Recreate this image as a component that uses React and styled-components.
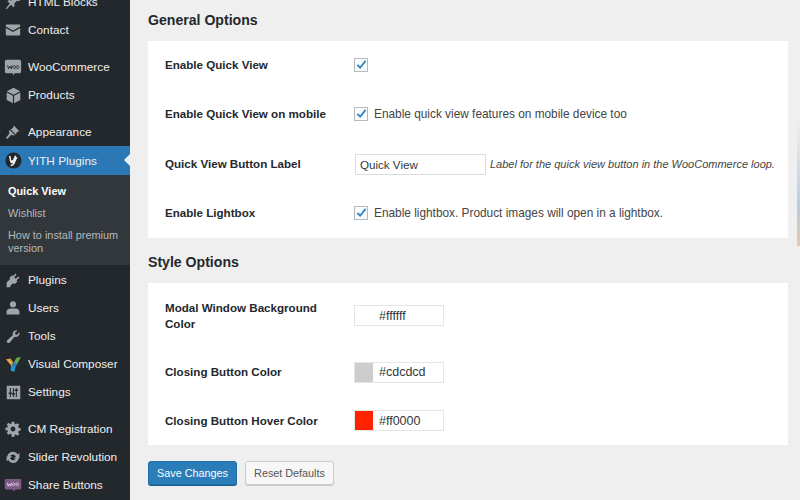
import React from 'react';
import styled, { createGlobalStyle } from 'styled-components';

const GlobalStyle = createGlobalStyle`
  html, body {
    margin: 0;
    padding: 0;
    height: 500px;
    overflow: hidden;
    background: #efefef;
    font-family: "Liberation Sans", Arial, sans-serif;
  }
`;

const Page = styled.div`
  position: relative;
  display: flex;
  width: 800px;
  height: 500px;
  overflow: hidden;
`;

const Sidebar = styled.nav`
  flex: 0 0 130px;
  height: 500px;
  overflow: hidden;
  background: #23282d;
`;

const MenuList = styled.div`
  display: flex;
  flex-direction: column;
  margin-top: -12px;
`;

const MenuItem = styled.div`
  position: relative;
  display: flex;
  align-items: center;
  flex: 0 0 ${(p) => (p.$active ? 29 : 28)}px;
  margin-top: ${(p) => (p.$gap ? 9 : 0)}px;
  color: #eeeeee;
  background: ${(p) => (p.$active ? '#2a78b6' : 'transparent')};
  font-size: 11.8px;
  ${(p) =>
    p.$active &&
    `&::after {
      content: '';
      position: absolute;
      right: 0;
      top: 8px;
      border: 6px solid transparent;
      border-right-color: #f1f1f1;
      border-left-width: 0;
    }`}
`;

const IconSlot = styled.span`
  flex: 0 0 28px;
  display: flex;
  justify-content: center;
  padding-right: 2px;
  box-sizing: border-box;
`;

const SubMenu = styled.div`
  display: flex;
  flex-direction: column;
  height: 90px;
  padding: 9px 8px 0;
  margin-bottom: 1px;
  box-sizing: border-box;
  background: #32373c;
`;

const SubItem = styled.div`
  font-size: 10.9px;
  line-height: 13px;
  margin-bottom: 8px;
  padding-top: 1px;
  color: ${(p) => (p.$current ? '#ffffff' : '#b4b9be')};
  font-weight: ${(p) => (p.$current ? 700 : 400)};
`;

const Main = styled.main`
  flex: 1;
  padding: 0 12px 0 18px;
  min-width: 0;
`;

const SectionTitle = styled.h2`
  margin: 0;
  height: ${(p) => p.$height}px;
  padding-top: ${(p) => p.$top}px;
  box-sizing: border-box;
  font-size: 14.1px;
  line-height: 18px;
  font-weight: 700;
  color: #23282d;
`;

const Card = styled.section`
  display: flex;
  flex-direction: column;
  height: ${(p) => p.$height}px;
  padding-left: 17px;
  box-sizing: border-box;
  background: #ffffff;
`;

const Row = styled.div`
  display: flex;
  align-items: center;
  height: ${(p) => p.$height}px;
`;

const Label = styled.div`
  flex: 0 0 189px;
  font-size: 11.6px;
  line-height: 16px;
  font-weight: 700;
  color: #23282d;
  padding-right: 14px;
  box-sizing: border-box;
`;

const CheckBox = styled.span`
  display: flex;
  align-items: center;
  justify-content: center;
  width: 12px;
  height: 12px;
  margin-right: 6px;
  border: 1px solid #b4b9be;
  background: #fbfbfb;
`;

const OptionText = styled.span`
  font-size: 11.85px;
  color: #444444;
`;

const TextInput = styled.div`
  width: 131px;
  height: 21px;
  margin: 0 4px 0 1px;
  padding-left: 4px;
  box-sizing: border-box;
  border: 1px solid #dddddd;
  font-size: 11.6px;
  line-height: 20px;
  color: #32373c;
`;

const Hint = styled.em`
  font-size: 11px;
  color: #444444;
`;

const ColorField = styled.div`
  display: flex;
  align-items: center;
  width: 90px;
  height: 21px;
  box-sizing: border-box;
  border: 1px solid #e5e5e5;
  font-size: 12.5px;
  color: #32373c;
`;

const Swatch = styled.span`
  flex: 0 0 18px;
  height: 19px;
  margin-right: 6px;
  background: ${(p) => p.$color};
`;

const Actions = styled.div`
  display: flex;
  gap: 8px;
  margin-top: 16px;
`;

const Button = styled.button`
  width: ${(p) => p.$width}px;
  height: 24px;
  padding: 0;
  border-radius: 3px;
  font-family: inherit;
  font-size: 10.8px;
  border: 1px solid ${(p) => (p.$primary ? '#1f6ea8' : '#cccccc')};
  background: ${(p) => (p.$primary ? '#2a7db9' : '#f7f7f7')};
  color: ${(p) => (p.$primary ? '#ffffff' : '#555555')};
  box-shadow: 0 1px 0 ${(p) => (p.$primary ? '#1a5f92' : '#cccccc')};
`;

const ScrollEdge = styled.div`
  position: absolute;
  right: 0;
  top: 118px;
  width: 3px;
  height: 128px;
  background: linear-gradient(#eef0f2, #b9cbdc 70%, #e8c9a5);
`;

const Ico = ({ children, view = '0 0 20 20', size = 16 }) => (
  <svg width={size} height={size} viewBox={view} fill="#a0a5aa" aria-hidden="true">
    {children}
  </svg>
);

const icons = {
  pin: (
    <Ico>
      <path d="M11 1l8 7-2 1-2-.5-3.500 3.500.5 3-1.500 1.500-3-3-5.500 5.500-1-1 5-6-3-3L5 7.500l3 .5L11.500 4.500 11 1z" />
    </Ico>
  ),
  mail: (
    <Ico>
      <path d="M2 3h16c.6 0 1 .4 1 1v1.500l-9 5-9-5V4c0-.6.4-1 1-1zM1 7.500l9 5 9-5V16c0 .6-.4 1-1 1H2c-.6 0-1-.4-1-1V7.500z" />
    </Ico>
  ),
  woo: (
    <Ico size={18}>
      <path d="M3 2h14c1.100 0 2 .9 2 2v11c0 1.100-.9 2-2 2h-5l-2 2.500V17H3c-1.100 0-2-.9-2-2V4c0-1.100.9-2 2-2z" />
      <path d="M4 8l1 4 1.500-3 1.500 3 1-4M11.500 8.500a1.600 1.600 0 1 0 .01 0zM15 8.500a1.600 1.600 0 1 0 .01 0z" fill="none" stroke="#23282d" strokeWidth="1" />
    </Ico>
  ),
  cube: (
    <Ico size={17}>
      <path d="M10 1l8 4-8 4-8-4 8-4zM2 6.500l7.300 3.700V19L2 15.300V6.500zM18 6.500v8.800L10.700 19v-8.800L18 6.500z" />
    </Ico>
  ),
  brush: (
    <Ico>
      <path d="M11 2l7 7-3 1-1.500 3L7 6.500 10 5l1-3zM6 7.500l6.500 6.500-2 .5-2.500-1-5 5-2-1 4.500-5.500-.5-2.500.5-2z" />
    </Ico>
  ),
  yith: (
    <svg width="17" height="17" viewBox="0 0 20 20" aria-hidden="true">
      <circle cx="10" cy="10" r="9.500" fill="#23282d" />
      <path d="M6.500 4.500l.8 4.800c.6.700 1.500.6 2.200-.2l1.500-3.600c.5-1 1.300-1.500 2.200-1.200l-.3 1.700 1.800.2-3.200 7c-1 2.300-2.600 3.500-5 3.300l.4-1.700c1.300.1 2.200-.4 2.800-1.500-1.800.6-3.400-.2-3.800-2L4.700 5l1.800-.5z" fill="#eeeeee" />
    </svg>
  ),
  plug: (
    <Ico>
      <path d="M13 2l1.500 1.500-3 3L13.500 8.500l3-3L18 7l-3.500 3.500 1 1-2 2.500c-1.500 1-3 1-4.500.5l-3 4.500H2V13l4-3.500c-.5-1.500 0-3 1-4L9.500 4l1 1L13 2z" />
    </Ico>
  ),
  user: (
    <Ico>
      <circle cx="10" cy="5.500" r="3.800" />
      <path d="M2 18v-3.500c0-2 2-4 4.500-4h7c2.500 0 4.500 2 4.500 4V18H2z" />
    </Ico>
  ),
  wrench: (
    <Ico>
      <path d="M18 5c.5 2-.1 3.800-1.400 5-1.200 1.100-3 1.500-4.600 1L6 18c-1 1-2.500 1-3.300.2C1.800 17.300 2 16 3 15l6.800-6c-.5-1.700-.1-3.500 1.200-4.800C12.200 3 14 2.500 15.500 3L12.500 6l.5 2 2 .5L18 5z" />
    </Ico>
  ),
  composer: (
    <svg width="15" height="15" viewBox="0 0 20 20" aria-hidden="true">
      <path d="M0 3l6-1 4 6-2 5z" fill="#e8a33a" />
      <path d="M10 8l4-7 6-1-5 9-4 1z" fill="#6aa84f" />
      <path d="M7 10l4-3 5 2-4 4z" fill="#2f7fbf" />
      <path d="M7 12l6 0-2 8-5-2z" fill="#1f9ad6" />
    </svg>
  ),
  sliders: (
    <Ico size={15}>
      <path fillRule="evenodd" d="M1 1h18v18H1V1zm4 3v6H3.500v2H5v4h1.500v-4H8v-2H6.500V4H5zm8 0v2h-1.500v2H13v8h1.500V8H16V6h-1.500V4H13zM9.200 4v7H8v2h1.200v3h1.400v-3h1.200v-2h-1.200V4H9.200z" />
    </Ico>
  ),
  gear: (
    <Ico size={16}>
      <path
        fillRule="evenodd"
        d="M8.500 1h3l.5 2.500 1.500.6 2.200-1.400 2.100 2.100-1.400 2.200.6 1.500 2.500.5v3l-2.500.5-.6 1.500 1.400 2.200-2.100 2.100-2.200-1.400-1.500.6-.5 2.500h-3L8 16.500l-1.500-.6-2.200 1.400-2.100-2.100 1.400-2.200-.6-1.500L.5 11.500v-3L3 8l.6-1.500-1.400-2.200 2.100-2.100 2.200 1.400L8 3.500 8.500 1zM10 7a3 3 0 1 0 .01 0z"
      />
    </Ico>
  ),
  refresh: (
    <Ico size={16}>
      <path d="M10 3.500c2.400 0 4.500 1.300 5.600 3.300L18 5v7h-7l2.600-2.500C12.900 8 11.600 7 10 7 8.300 7 6.800 8.100 6.300 9.700L2.900 8.800C3.800 5.700 6.600 3.500 10 3.500zM2 15V9h7l-2.600 2.500C7.100 13 8.400 14 10 14c1.700 0 3.200-1.100 3.700-2.700l3.400.9c-.9 3.100-3.700 5.300-7.100 5.300-2.400 0-4.500-1.300-5.600-3.300L2 15z" />
    </Ico>
  ),
  share: (
    <svg width="18" height="14" viewBox="0 0 20 16" aria-hidden="true">
      <path d="M2 1h16c.8 0 1.500.7 1.500 1.500v9c0 .8-.7 1.500-1.500 1.500h-5l-3 2.500V13H2c-.8 0-1.500-.7-1.500-1.500v-9C.5 1.700 1.200 1 2 1z" fill="#7b5a86" />
      <path d="M3.500 5.500l1 4 1.500-3 1.500 3 1-4M11 5.800a1.500 1.500 0 1 0 .01 0zM15 5.800a1.500 1.500 0 1 0 .01 0z" fill="none" stroke="#e6dcea" strokeWidth="1" />
    </svg>
  ),
};

const topMenu = [
  { icon: 'pin', label: 'HTML Blocks' },
  { icon: 'mail', label: 'Contact' },
  { icon: 'woo', label: 'WooCommerce', gap: true },
  { icon: 'cube', label: 'Products' },
  { icon: 'brush', label: 'Appearance', gap: true },
  { icon: 'yith', label: 'YITH Plugins', active: true },
];

const bottomMenu = [
  { icon: 'plug', label: 'Plugins' },
  { icon: 'user', label: 'Users' },
  { icon: 'wrench', label: 'Tools' },
  { icon: 'composer', label: 'Visual Composer' },
  { icon: 'sliders', label: 'Settings' },
  { icon: 'gear', label: 'CM Registration', gap: true },
  { icon: 'refresh', label: 'Slider Revolution' },
  { icon: 'share', label: 'Share Buttons' },
];

const renderItem = (item) => (
  <MenuItem key={item.label} $gap={item.gap} $active={item.active}>
    <IconSlot>{icons[item.icon]}</IconSlot>
    {item.label}
  </MenuItem>
);

const Check = () => (
  <CheckBox>
    <svg width="11" height="11" viewBox="0 0 12 12" aria-hidden="true">
      <path d="M1.500 6.500l3 3L10.500 2" fill="none" stroke="#2a86c8" strokeWidth="2" />
    </svg>
  </CheckBox>
);

const ColorInput = ({ value, swatch }) => (
  <ColorField>
    <Swatch $color={swatch || value} />
    {value}
  </ColorField>
);

export default function App() {
  return (
    <Page>
      <GlobalStyle />
      <Sidebar>
        <MenuList>
          {topMenu.map(renderItem)}
          <SubMenu>
            <SubItem $current>Quick View</SubItem>
            <SubItem>Wishlist</SubItem>
            <SubItem>How to install premium version</SubItem>
          </SubMenu>
          {bottomMenu.map(renderItem)}
        </MenuList>
      </Sidebar>
      <Main>
        <SectionTitle $height={41} $top={11}>General Options</SectionTitle>
        <Card $height={197}>
          <Row $height={47}>
            <Label>Enable Quick View</Label>
            <Check />
          </Row>
          <Row $height={51}>
            <Label>Enable Quick View on mobile</Label>
            <Check />
            <OptionText>Enable quick view features on mobile device too</OptionText>
          </Row>
          <Row $height={50}>
            <Label>Quick View Button Label</Label>
            <TextInput>Quick View</TextInput>
            <Hint>Label for the quick view button in the WooCommerce loop.</Hint>
          </Row>
          <Row $height={47}>
            <Label>Enable Lightbox</Label>
            <Check />
            <OptionText>Enable lightbox. Product images will open in a lightbox.</OptionText>
          </Row>
        </Card>
        <SectionTitle $height={45} $top={15}>Style Options</SectionTitle>
        <Card $height={162}>
          <Row $height={65}>
            <Label>Modal Window Background Color</Label>
            <ColorInput value="#ffffff" />
          </Row>
          <Row $height={48}>
            <Label>Closing Button Color</Label>
            <ColorInput value="#cdcdcd" />
          </Row>
          <Row $height={49}>
            <Label>Closing Button Hover Color</Label>
            <ColorInput value="#ff0000" swatch="#ff2200" />
          </Row>
        </Card>
        <Actions>
          <Button $primary $width={89}>Save Changes</Button>
          <Button $width={89}>Reset Defaults</Button>
        </Actions>
      </Main>
      <ScrollEdge />
    </Page>
  );
}
